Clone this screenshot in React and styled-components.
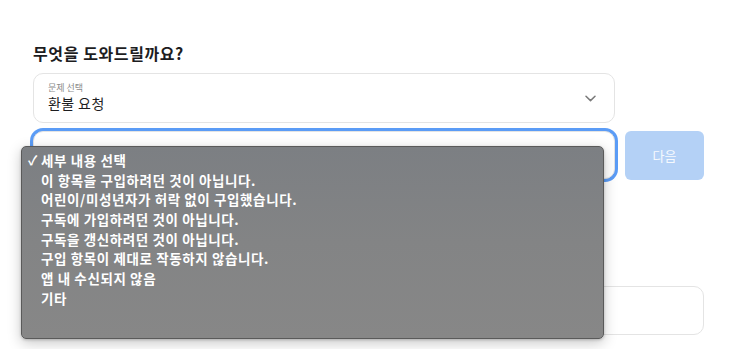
import React from "react";
import styled, { createGlobalStyle } from "styled-components";

const Global = createGlobalStyle`
  * { box-sizing: border-box; }
  html, body { margin: 0; padding: 0; background: #ffffff; }
  body { font-family: "Noto Sans CJK KR", "Noto Sans", sans-serif; }
`;

const Page = styled.div`
  width: 729px;
  height: 349px;
  overflow: hidden;
  padding: 42px 0 0 33px;
`;

const Form = styled.div`
  width: 672px;
  display: flex;
  flex-direction: column;
`;

const Heading = styled.h2`
  margin: 0 0 8px;
  font-size: 16px;
  line-height: 23px;
  font-weight: 700;
  color: #1d1d1f;
  letter-spacing: 0.6px;
`;

const SelectBox = styled.div`
  position: relative;
  width: 582px;
  height: ${(p) => p.$h || 50}px;
  border: 1px solid #e4e4e4;
  border-radius: 10px;
  background: #fff;
  display: flex;
  align-items: center;
  padding: 0 14px;
  box-shadow: ${(p) => (p.$focused ? "0 0 0 3px #5b9cf6" : "none")};
`;

const SelectText = styled.div`
  display: flex;
  flex-direction: column;
  flex: 1;
`;

const SmallLabel = styled.span`
  font-size: 9px;
  line-height: 12px;
  color: #8a8a8a;
  margin-top: -1px;
`;

const Value = styled.span`
  font-size: 14px;
  line-height: 19px;
  color: #1d1d1f;
  letter-spacing: 0.4px;
`;

const Chevron = styled.svg`
  width: 11px;
  height: 7px;
  margin-right: 4px;
`;

const Row = styled.div`
  display: flex;
  align-items: flex-start;
  gap: 10px;
  margin-top: 8px;
`;

const NextButton = styled.button`
  width: 79px;
  height: 49px;
  border: none;
  border-radius: 6px;
  background: #b4d1f6;
  color: rgba(255, 255, 255, 0.9);
  font-family: inherit;
  font-size: 13px;
  padding: 0;
`;

const Spacer = styled.div`
  height: ${(p) => p.$h}px;
`;

const TextBox = styled.div`
  width: 671px;
  height: 49px;
  border: 1px solid #e4e4e4;
  border-radius: 10px;
  background: #fff;
`;

const Menu = styled.ul`
  position: absolute;
  left: -13px;
  top: 14px;
  width: 583px;
  height: 193px;
  margin: 0;
  padding: 3px 0 0;
  list-style: none;
  background: linear-gradient(180deg, #7c7f83 0%, #838485 50%, #878787 100%);
  border: 1px solid #5a5a5a;
  border-radius: 5px;
  box-shadow: 0 4px 14px rgba(0, 0, 0, 0.22), 0 1px 3px rgba(0, 0, 0, 0.2);
  z-index: 10;
`;

const Item = styled.li`
  display: flex;
  align-items: center;
  height: 19.7px;
  padding-left: 6px;
  font-size: 13.5px;
  letter-spacing: 0.6px;
  font-weight: 600;
  color: #ffffff;
  white-space: nowrap;
`;

const Check = styled.span`
  width: 13px;
  display: inline-block;
  font-size: 13px;
  letter-spacing: 0;
`;

const options = [
  "세부 내용 선택",
  "이 항목을 구입하려던 것이 아닙니다.",
  "어린이/미성년자가 허락 없이 구입했습니다.",
  "구독에 가입하려던 것이 아닙니다.",
  "구독을 갱신하려던 것이 아닙니다.",
  "구입 항목이 제대로 작동하지 않습니다.",
  "앱 내 수신되지 않음",
  "기타",
];

export default function App() {
  return (
    <>
      <Global />
      <Page>
        <Form>
          <Heading>무엇을 도와드릴까요?</Heading>
          <SelectBox>
            <SelectText>
              <SmallLabel>문제 선택</SmallLabel>
              <Value>환불 요청</Value>
            </SelectText>
            <Chevron viewBox="0 0 11 7" fill="none">
              <path d="M1 1.2 L5.5 5.6 L10 1.2" stroke="#7a7a7a" strokeWidth="1.5" strokeLinecap="round" strokeLinejoin="round" />
            </Chevron>
          </SelectBox>
          <Row>
            <SelectBox $focused $h={48}>
              <Menu>
                {options.map((o, i) => (
                  <Item key={o}>
                    <Check>{i === 0 ? "✓" : ""}</Check>
                    {o}
                  </Item>
                ))}
              </Menu>
            </SelectBox>
            <NextButton>다음</NextButton>
          </Row>
          <Spacer $h={106} />
          <TextBox />
        </Form>
      </Page>
    </>
  );
}
